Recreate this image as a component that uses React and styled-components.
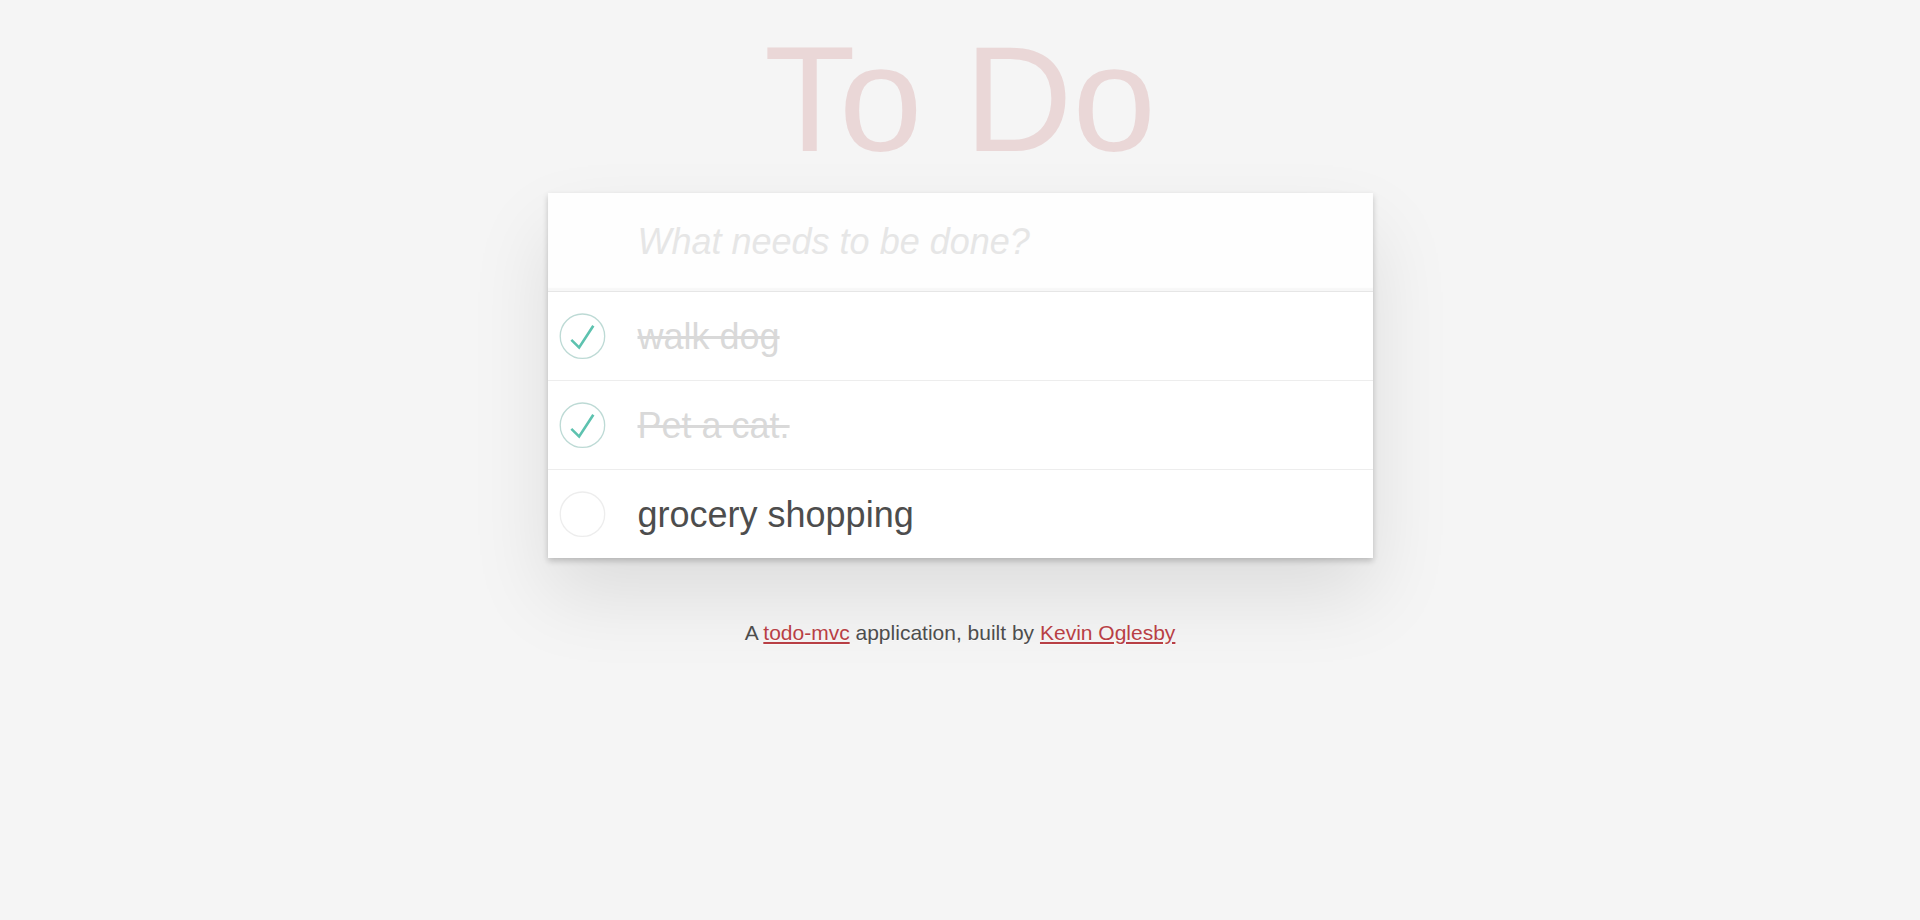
import React from "react";
import styled, { createGlobalStyle } from "styled-components";

const GlobalStyle = createGlobalStyle`
  html, body {
    margin: 0;
    padding: 0;
  }
  body {
    background: #f5f5f5;
    font-family: "Liberation Sans", Arial, sans-serif;
    color: #4d4d4d;
    min-height: 920px;
  }
`;

const Page = styled.div`
  display: flex;
  flex-direction: column;
  align-items: center;
  padding-top: 24px;
`;

const Title = styled.h1`
  margin: 0;
  height: 150px;
  font-size: 150px;
  line-height: 150px;
  font-weight: 100;
  color: rgba(175, 47, 47, 0.15);
  text-align: center;
  text-rendering: optimizeLegibility;
`;

const Card = styled.section`
  margin-top: 19px;
  width: 825px;
  background: #fff;
  box-shadow: 0 3px 6px 0 rgba(0, 0, 0, 0.2), 0 37.5px 75px 0 rgba(0, 0, 0, 0.1);
`;

const NewTodo = styled.input`
  display: block;
  box-sizing: border-box;
  width: 100%;
  height: 98px;
  margin: 0;
  padding: 0 24px 0 90px;
  border: none;
  outline: none;
  font-family: inherit;
  font-size: 36px;
  color: #4d4d4d;
  background: rgba(0, 0, 0, 0.003);
  box-shadow: inset 0 -3px 1.5px rgba(0, 0, 0, 0.03);

  &::placeholder {
    font-style: italic;
    color: #e6e6e6;
  }
`;

const List = styled.ul`
  margin: 0;
  padding: 0;
  list-style: none;
  border-top: 1px solid #e6e6e6;
`;

const Item = styled.li`
  display: flex;
  align-items: center;
  border-bottom: 1px solid #ededed;

  &:last-child {
    border-bottom: none;
  }
`;

const Toggle = styled.svg`
  flex: 0 0 60px;
  width: 60px;
  height: 60px;
  display: block;
`;

const Label = styled.span`
  flex: 1;
  padding: 22.5px 22.5px 22.5px 30px;
  font-size: 36px;
  line-height: 43px;
  color: ${(p) => (p.$done ? "#d9d9d9" : "#4d4d4d")};
  text-decoration: ${(p) => (p.$done ? "line-through" : "none")};
  word-break: break-all;
`;

const Info = styled.footer`
  margin-top: 63px;
  font-size: 21px;
  color: #4d4d4d;
  text-align: center;
  text-shadow: 0 1px 0 rgba(255, 255, 255, 0.5);
`;

const Link = styled.a`
  color: #b83f45;
  text-decoration: underline;
`;

function Check({ done }) {
  return (
    <Toggle viewBox="-10 -18 100 135" aria-hidden="true">
      <circle
        cx="50"
        cy="50"
        r="50"
        fill="none"
        stroke={done ? "#bddad5" : "#ededed"}
        strokeWidth="3"
      />
      {done && (
        <path fill="#5dc2af" d="M72 25L42 71 27 56l-4 4 20 20 34-52z" />
      )}
    </Toggle>
  );
}

const todos = [
  { id: 1, text: "walk dog", done: true },
  { id: 2, text: "Pet a cat.", done: true },
  { id: 3, text: "grocery shopping", done: false },
];

export default function App() {
  return (
    <>
      <GlobalStyle />
      <Page>
        <Title>To Do</Title>
        <Card>
          <NewTodo placeholder="What needs to be done?" />
          <List>
            {todos.map((t) => (
              <Item key={t.id}>
                <Check done={t.done} />
                <Label $done={t.done}>{t.text}</Label>
              </Item>
            ))}
          </List>
        </Card>
        <Info>
          A <Link href="#">todo-mvc</Link> application, built by{" "}
          <Link href="#">Kevin Oglesby</Link>
        </Info>
      </Page>
    </>
  );
}
